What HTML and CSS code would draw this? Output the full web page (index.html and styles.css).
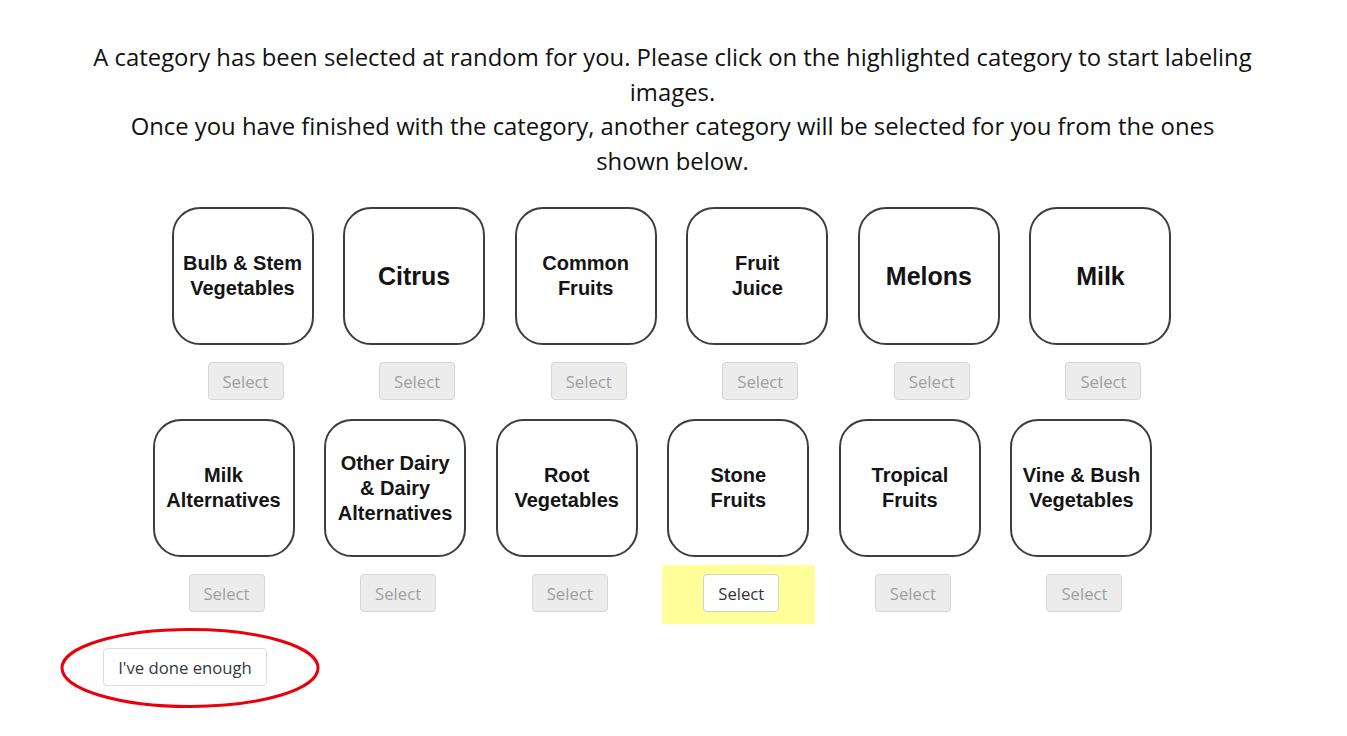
FILE: index.html
```html
<!DOCTYPE html>
<html lang="en">
<head>
<meta charset="utf-8">
<title>Select a category</title>
<link rel="stylesheet" href="styles.css">
</head>
<body>
<div class="intro">
  <p>A category has been selected at random for you. Please click on the highlighted category to start labeling images.</p>
  <p>Once you have finished with the category, another category will be selected for you from the ones shown below.</p>
</div>

<div class="categories">
  <div class="row">
    <div class="cell"><div class="tile"><span>Bulb &amp; Stem<br>Vegetables</span></div><div class="select-area"><button class="btn-select" disabled>Select</button></div></div>
    <div class="cell"><div class="tile big"><span>Citrus</span></div><div class="select-area"><button class="btn-select" disabled>Select</button></div></div>
    <div class="cell"><div class="tile"><span>Common<br>Fruits</span></div><div class="select-area"><button class="btn-select" disabled>Select</button></div></div>
    <div class="cell"><div class="tile"><span>Fruit<br>Juice</span></div><div class="select-area"><button class="btn-select" disabled>Select</button></div></div>
    <div class="cell"><div class="tile big"><span>Melons</span></div><div class="select-area"><button class="btn-select" disabled>Select</button></div></div>
    <div class="cell"><div class="tile big"><span>Milk</span></div><div class="select-area"><button class="btn-select" disabled>Select</button></div></div>
  </div>
  <div class="row row-second">
    <div class="cell"><div class="tile"><span>Milk<br>Alternatives</span></div><div class="select-area"><button class="btn-select" disabled>Select</button></div></div>
    <div class="cell"><div class="tile"><span>Other Dairy<br>&amp; Dairy<br>Alternatives</span></div><div class="select-area"><button class="btn-select" disabled>Select</button></div></div>
    <div class="cell"><div class="tile"><span>Root<br>Vegetables</span></div><div class="select-area"><button class="btn-select" disabled>Select</button></div></div>
    <div class="cell"><div class="tile"><span>Stone<br>Fruits</span></div><div class="select-area highlight"><button class="btn-select active">Select</button></div></div>
    <div class="cell"><div class="tile"><span>Tropical<br>Fruits</span></div><div class="select-area"><button class="btn-select" disabled>Select</button></div></div>
    <div class="cell"><div class="tile"><span>Vine &amp; Bush<br>Vegetables</span></div><div class="select-area"><button class="btn-select" disabled>Select</button></div></div>
  </div>
</div>

<div class="footer">
  <button class="btn-done">I've done enough</button>
  <svg class="ring" width="262" height="82" viewBox="0 0 262 82" aria-hidden="true">
    <ellipse cx="131" cy="41" rx="128" ry="38.5" fill="none" stroke="#e8000b" stroke-width="3"/>
  </svg>
</div>
</body>
</html>
```

FILE: styles.css
```css
html, body {
  margin: 0;
  padding: 0;
  background: #ffffff;
}

body {
  font-family: "Open Sans", "Noto Sans", sans-serif;
  color: #111111;
  min-height: 736px;
}

.intro {
  width: 1160px;
  margin: 40px auto 0;
  text-align: center;
  font-size: 23.85px;
  line-height: 34.5px;
  position: relative;
  left: -1px;
}

.intro p {
  margin: 0;
}

.categories {
  margin-top: 29px;
  margin-left: 166px;
  display: flex;
  flex-direction: column;
  gap: 7px;
}

.row {
  display: flex;
  gap: 18.6px;
}

.row-second {
  margin-left: -19px;
}

.cell {
  width: 153px;
  display: flex;
  flex-direction: column;
  align-items: center;
}

.tile {
  box-sizing: border-box;
  width: 142px;
  height: 138px;
  border: 2.5px solid #3d3d3d;
  border-radius: 28px;
  display: flex;
  align-items: center;
  justify-content: center;
  text-align: center;
  font-family: "Liberation Sans", Arial, sans-serif;
  font-weight: bold;
  font-size: 20px;
  line-height: 25px;
  color: #141414;
}

.tile.big {
  font-size: 25px;
}

.select-area {
  box-sizing: border-box;
  margin-top: 8px;
  width: 153px;
  height: 59px;
  padding: 9px 0 0 6px;
  display: flex;
  align-items: flex-start;
  justify-content: center;
}

.select-area.highlight {
  background: #ffff99;
}

.btn-select {
  box-sizing: border-box;
  width: 76px;
  height: 38px;
  border: 1px solid #d6d6d6;
  border-radius: 4px;
  background: #ececec;
  color: #a0a0a0;
  font-family: "Open Sans", sans-serif;
  font-size: 16.7px;
  padding: 0;
}

.btn-select.active {
  background: #ffffff;
  color: #333333;
  border-color: #d0d0d0;
}

.footer {
  position: relative;
  margin-top: 5px;
  padding: 19px 0 25px 103px;
}

.btn-done {
  box-sizing: border-box;
  width: 164px;
  height: 38px;
  border: 1px solid #dcdcdc;
  border-radius: 4px;
  background: #ffffff;
  color: #333a44;
  font-family: "Open Sans", sans-serif;
  font-size: 16.7px;
  padding: 0;
  vertical-align: top;
}

.ring {
  position: absolute;
  left: 59px;
  top: -2px;
  pointer-events: none;
}
```
